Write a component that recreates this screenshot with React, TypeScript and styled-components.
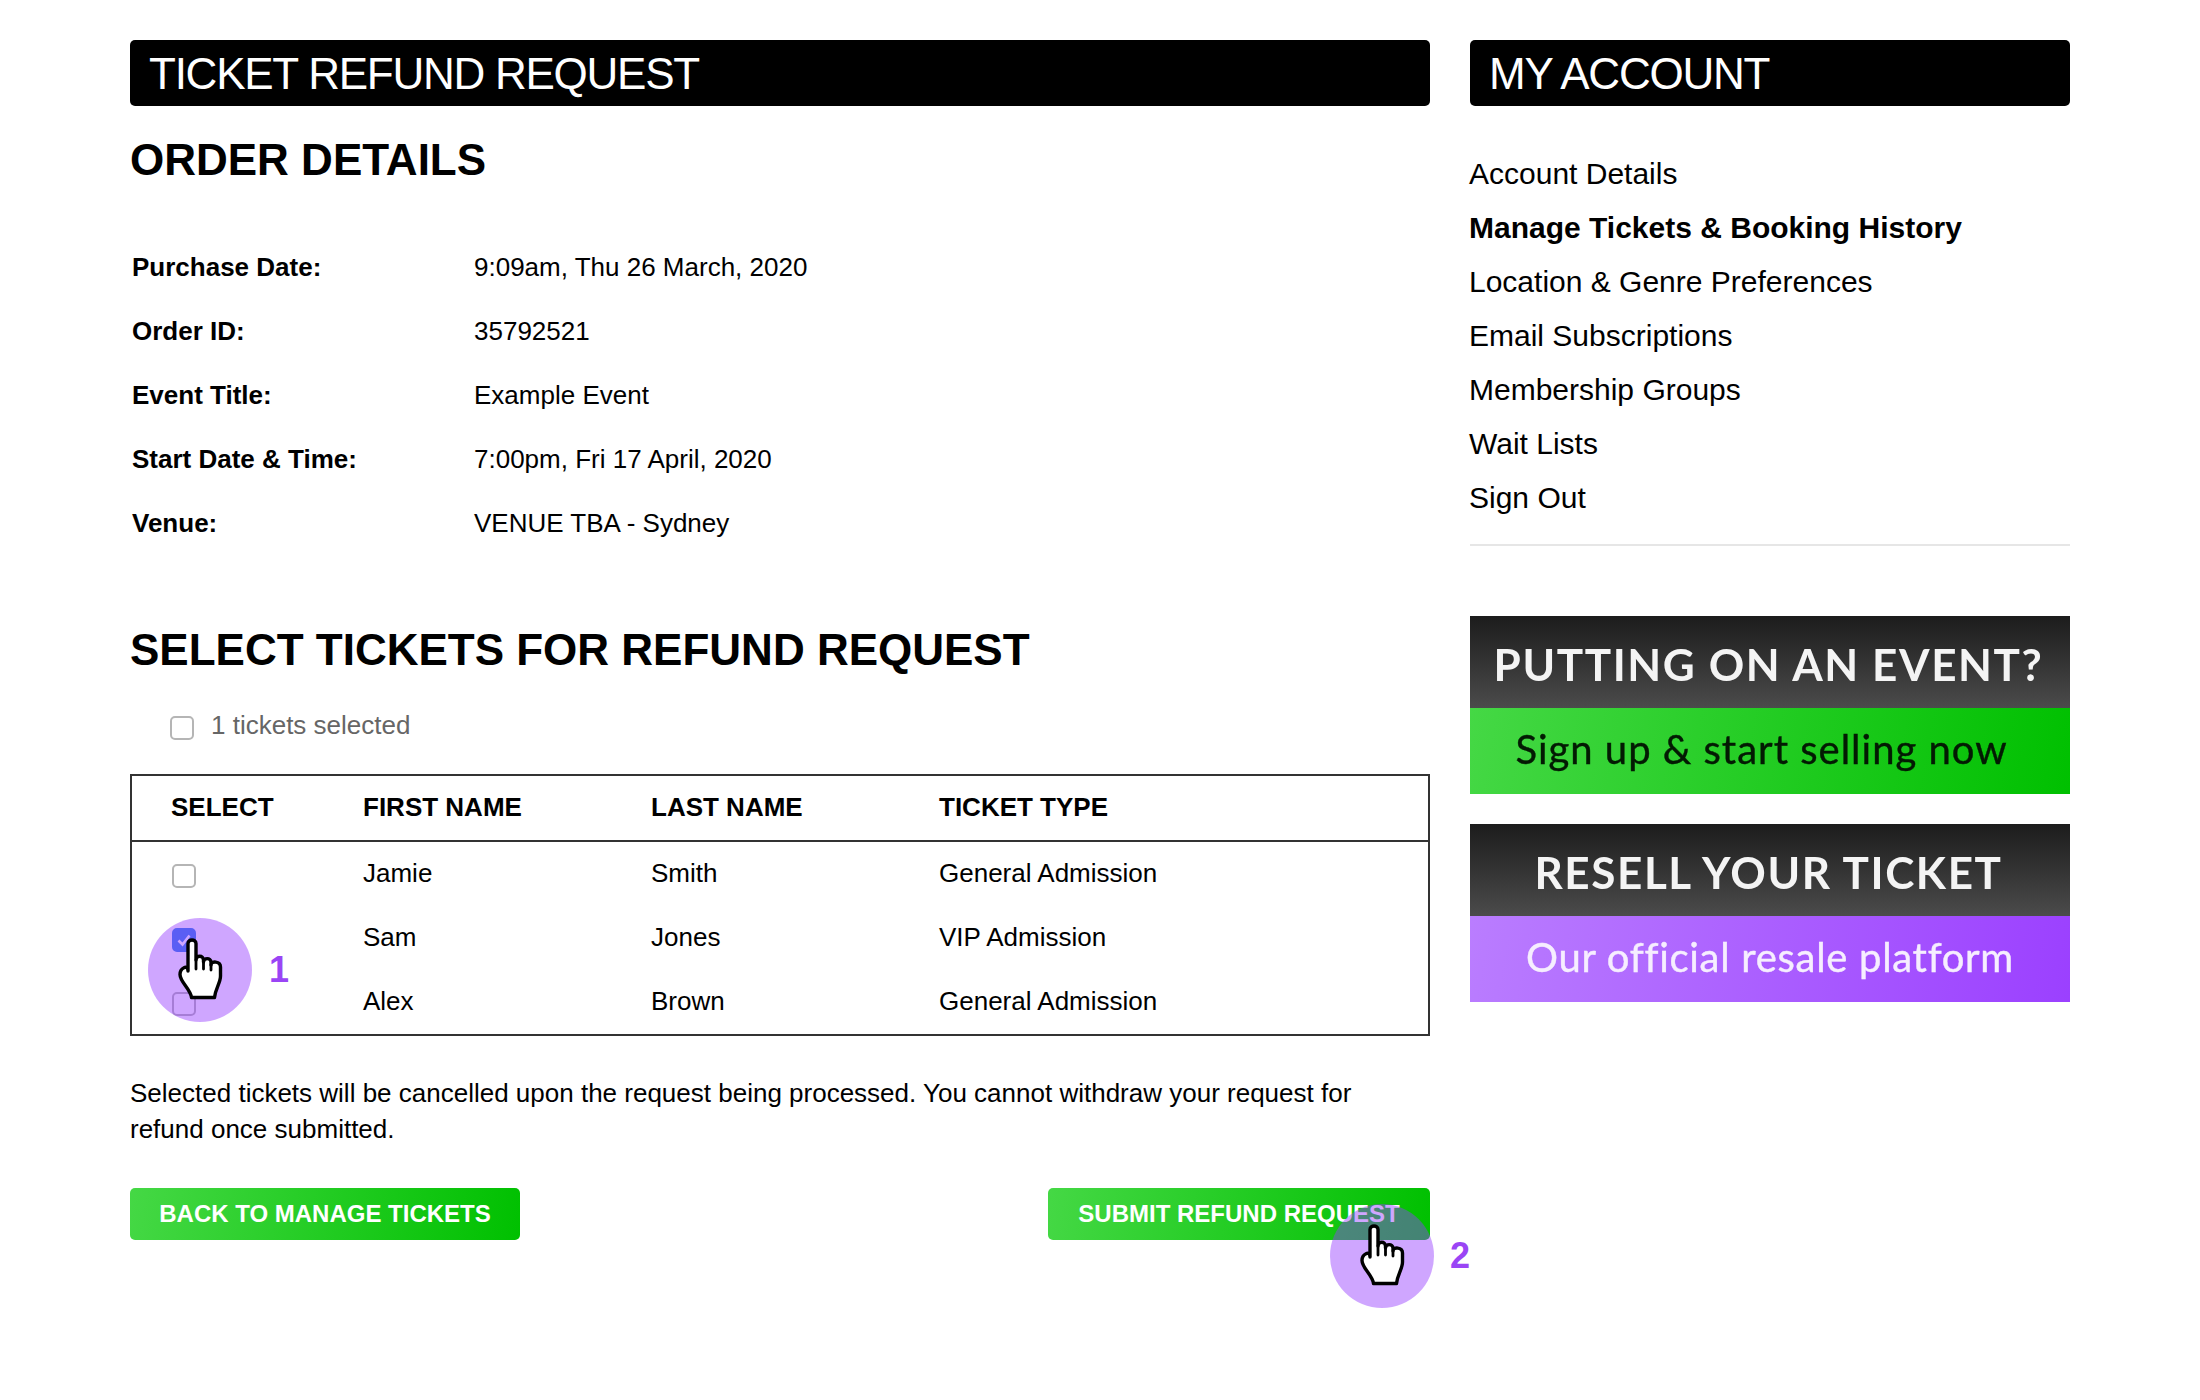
import React from "react";
import styled, { createGlobalStyle } from "styled-components";

const Global = createGlobalStyle`
  html, body { margin: 0; padding: 0; background: #fff; }
  body { font-family: "Liberation Sans", Arial, sans-serif; color: #000; }
`;

const Page = styled.div`
  width: 2200px;
  height: 1400px;
  box-sizing: border-box;
  padding: 40px 130px 0;
  display: grid;
  grid-template-columns: 1300px 600px;
  column-gap: 40px;
  align-items: start;
`;
const Column = styled.main`
  display: flex;
  flex-direction: column;
`;
const Side = styled.aside`
  display: flex;
  flex-direction: column;
`;
const TitleBar = styled.h1`
  margin: 0;
  height: 66px;
  box-sizing: border-box;
  padding-left: 19px;
  background: #000;
  color: #fff;
  border-radius: 5px;
  font-size: 44px;
  font-weight: 400;
  line-height: 67px;
  letter-spacing: -1.25px;
  white-space: nowrap;
`;
const Heading = styled.h2<{ $top: number }>`
  margin: ${(p) => p.$top}px 0 0;
  font-size: 44px;
  line-height: 50px;
  font-weight: 700;
  white-space: nowrap;
`;
const Details = styled.dl`
  margin: 50px 0 0;
  display: grid;
  grid-template-columns: 342px 1fr;
  grid-auto-rows: 64px;
  padding-left: 2px;
`;
const Term = styled.dt`
  font-size: 26px;
  font-weight: 700;
  line-height: 64px;
`;
const Value = styled.dd`
  margin: 0;
  font-size: 26px;
  line-height: 64px;
`;
const SelectedRow = styled.div`
  margin-top: 30px;
  padding-left: 40px;
  height: 40px;
  display: flex;
  align-items: center;
  gap: 17px;
  color: #666;
  font-size: 26px;
`;
const Box = styled.span<{ $checked?: boolean }>`
  width: 24px;
  height: 24px;
  flex: none;
  box-sizing: border-box;
  display: flex;
  align-items: center;
  justify-content: center;
  border-radius: 5px;
  border: 2px solid ${(p) => (p.$checked ? "#2a7dec" : "#b5b5b5")};
  background: ${(p) => (p.$checked ? "#2a7dec" : "#fff")};
  transform: translateY(3px);
`;
const RowBox = styled(Box)`
  margin-left: 1px;
`;
const TableWrap = styled.div`
  position: relative;
  margin-top: 29px;
`;
const Table = styled.table`
  width: 1300px;
  height: 262px;
  box-sizing: border-box;
  border: 2px solid #333;
  border-collapse: separate;
  border-spacing: 0;
  table-layout: fixed;
`;
const Th = styled.th<{ $w: number; $lead?: boolean }>`
  width: ${(p) => p.$w}px;
  height: 66px;
  box-sizing: border-box;
  padding: 0 0 2px ${(p) => (p.$lead ? 39 : 0)}px;
  border-bottom: 2px solid #333;
  text-align: left;
  font-size: 26px;
  font-weight: 700;
`;
const Td = styled.td<{ $lead?: boolean }>`
  height: 64px;
  box-sizing: border-box;
  padding: 0 0 2px ${(p) => (p.$lead ? 39 : 0)}px;
  font-size: 26px;
  vertical-align: middle;
`;
const Note = styled.p`
  margin: 39px 0 0;
  font-size: 26px;
  line-height: 36px;
  width: 1260px;
`;
const Actions = styled.div`
  position: relative;
  margin-top: 41px;
  display: flex;
  justify-content: space-between;
`;
const Button = styled.button<{ $w: number }>`
  width: ${(p) => p.$w}px;
  height: 52px;
  padding: 0;
  border: 0;
  border-radius: 5px;
  background: linear-gradient(100deg, #45d845 0%, #00c000 100%);
  color: #fff;
  font-family: inherit;
  font-size: 24px;
  font-weight: 700;
  white-space: nowrap;
`;
const Ripple = styled.div<{ $left: number; $top: number }>`
  position: absolute;
  left: ${(p) => p.$left}px;
  top: ${(p) => p.$top}px;
  width: 104px;
  height: 104px;
  border-radius: 50%;
  background: rgba(149, 58, 255, 0.45);
`;
const Hand = styled.svg`
  position: absolute;
  left: 30px;
  top: 20px;
  width: 46px;
  height: 62px;
`;
const Step = styled.span<{ $left: number; $top: number }>`
  position: absolute;
  left: ${(p) => p.$left}px;
  top: ${(p) => p.$top}px;
  color: #9a45f5;
  font-size: 36px;
  line-height: 40px;
  font-weight: 700;
`;
const Menu = styled.ul`
  list-style: none;
  margin: 41px 0 0;
  padding: 0 0 19px;
  border-bottom: 2px solid #e6e6e6;
`;
const MenuItem = styled.li<{ $active?: boolean }>`
  height: 54px;
  margin-left: -1px;
  font-size: 30px;
  line-height: 54px;
  font-weight: ${(p) => (p.$active ? 700 : 400)};
  white-space: nowrap;
`;
const Promo = styled.div<{ $top: number }>`
  margin-top: ${(p) => p.$top}px;
  height: 178px;
  display: flex;
  flex-direction: column;
  font-family: Lato, "Open Sans", sans-serif;
`;
const PromoHead = styled.div`
  height: 92px;
  box-sizing: border-box;
  padding: 3px 3px 0 0;
  display: flex;
  align-items: center;
  justify-content: center;
  background: linear-gradient(180deg, #1c1c1c 0%, #4b4b4b 100%);
  color: #f4f4f4;
  font-size: 44px;
  font-weight: 700;
  letter-spacing: 1.6px;
  white-space: nowrap;
  & > span { filter: blur(0.6px); }
`;
const PromoFoot = styled.div<{ $tone: "green" | "purple" }>`
  flex: 1;
  box-sizing: border-box;
  padding: 0 ${(p) => (p.$tone === "green" ? 17 : 0)}px 4px 0;
  display: flex;
  align-items: center;
  justify-content: center;
  font-size: 40px;
  letter-spacing: ${(p) => (p.$tone === "green" ? 1 : 0.7)}px;
  white-space: nowrap;
  -webkit-text-stroke: 0.4px currentColor;
  color: ${(p) => (p.$tone === "green" ? "#031a03" : "#f6eeff")};
  background: ${(p) =>
    p.$tone === "green"
      ? "linear-gradient(100deg, #45d845 0%, #00c000 100%)"
      : "linear-gradient(100deg, #ba7dff 0%, #9b40ff 100%)"};
  & > span { filter: blur(0.6px); }
`;

const details: [string, string][] = [
  ["Purchase Date:", "9:09am, Thu 26 March, 2020"],
  ["Order ID:", "35792521"],
  ["Event Title:", "Example Event"],
  ["Start Date & Time:", "7:00pm, Fri 17 April, 2020"],
  ["Venue:", "VENUE TBA - Sydney"],
];
const tickets = [
  { first: "Jamie", last: "Smith", type: "General Admission", checked: false },
  { first: "Sam", last: "Jones", type: "VIP Admission", checked: true },
  { first: "Alex", last: "Brown", type: "General Admission", checked: false },
];
const menu = [
  "Account Details",
  "Manage Tickets & Booking History",
  "Location & Genre Preferences",
  "Email Subscriptions",
  "Membership Groups",
  "Wait Lists",
  "Sign Out",
];

const Pointer = () => (
  <Hand viewBox="0 0 46 62" fill="none">
    <path
      d="M10 5.5C10 .9 18 .9 18 5.5V22C18 17 25.5 17 25.5 22V24C25.5 19.5 33 19.5 33 24V27C33 22.5 42.5 23 42.5 29V38C42.5 45 37.5 50 36.5 59.5H13.5C12.5 51 2 44 2 36.5C2 30 10 26 10 33Z"
      fill="#fff"
      stroke="#000"
      strokeWidth="3.4"
      strokeLinejoin="round"
    />
    <path d="M18 22V31M25.5 24V31M33 27V32" stroke="#000" strokeWidth="2.8" strokeLinecap="round" />
  </Hand>
);
const Tick = () => (
  <svg width="16" height="16" viewBox="0 0 16 16" fill="none">
    <path d="M2.5 8.5 6.5 12.5 13.5 3.5" stroke="#fff" strokeWidth="2.6" />
  </svg>
);

export default function App() {
  return (
    <Page>
      <Global />
      <Column>
        <TitleBar>TICKET REFUND REQUEST</TitleBar>
        <Heading $top={29}>ORDER DETAILS</Heading>
        <Details>
          {details.map(([k, v]) => (
            <React.Fragment key={k}>
              <Term>{k}</Term>
              <Value>{v}</Value>
            </React.Fragment>
          ))}
        </Details>
        <Heading $top={70}>SELECT TICKETS FOR REFUND REQUEST</Heading>
        <SelectedRow>
          <Box />
          1 tickets selected
        </SelectedRow>
        <TableWrap>
          <Table>
            <thead>
              <tr>
                <Th $w={231} $lead>SELECT</Th>
                <Th $w={288}>FIRST NAME</Th>
                <Th $w={288}>LAST NAME</Th>
                <Th $w={489}>TICKET TYPE</Th>
              </tr>
            </thead>
            <tbody>
              {tickets.map((t) => (
                <tr key={t.first}>
                  <Td $lead>
                    <RowBox $checked={t.checked}>{t.checked && <Tick />}</RowBox>
                  </Td>
                  <Td>{t.first}</Td>
                  <Td>{t.last}</Td>
                  <Td>{t.type}</Td>
                </tr>
              ))}
            </tbody>
          </Table>
          <Ripple $left={18} $top={144}>
            <Pointer />
          </Ripple>
          <Step $left={139} $top={176}>1</Step>
        </TableWrap>
        <Note>
          Selected tickets will be cancelled upon the request being processed. You cannot withdraw your request for
          refund once submitted.
        </Note>
        <Actions>
          <Button $w={390}>BACK TO MANAGE TICKETS</Button>
          <Button $w={382}>SUBMIT REFUND REQUEST</Button>
          <Ripple $left={1200} $top={16}>
            <Pointer />
          </Ripple>
          <Step $left={1320} $top={48}>2</Step>
        </Actions>
      </Column>
      <Side>
        <TitleBar>MY ACCOUNT</TitleBar>
        <Menu>
          {menu.map((m, i) => (
            <MenuItem key={m} $active={i === 1}>{m}</MenuItem>
          ))}
        </Menu>
        <Promo $top={70}>
          <PromoHead><span>PUTTING ON AN EVENT?</span></PromoHead>
          <PromoFoot $tone="green"><span>Sign up &amp; start selling now</span></PromoFoot>
        </Promo>
        <Promo $top={30}>
          <PromoHead><span>RESELL YOUR TICKET</span></PromoHead>
          <PromoFoot $tone="purple"><span>Our official resale platform</span></PromoFoot>
        </Promo>
      </Side>
    </Page>
  );
}
